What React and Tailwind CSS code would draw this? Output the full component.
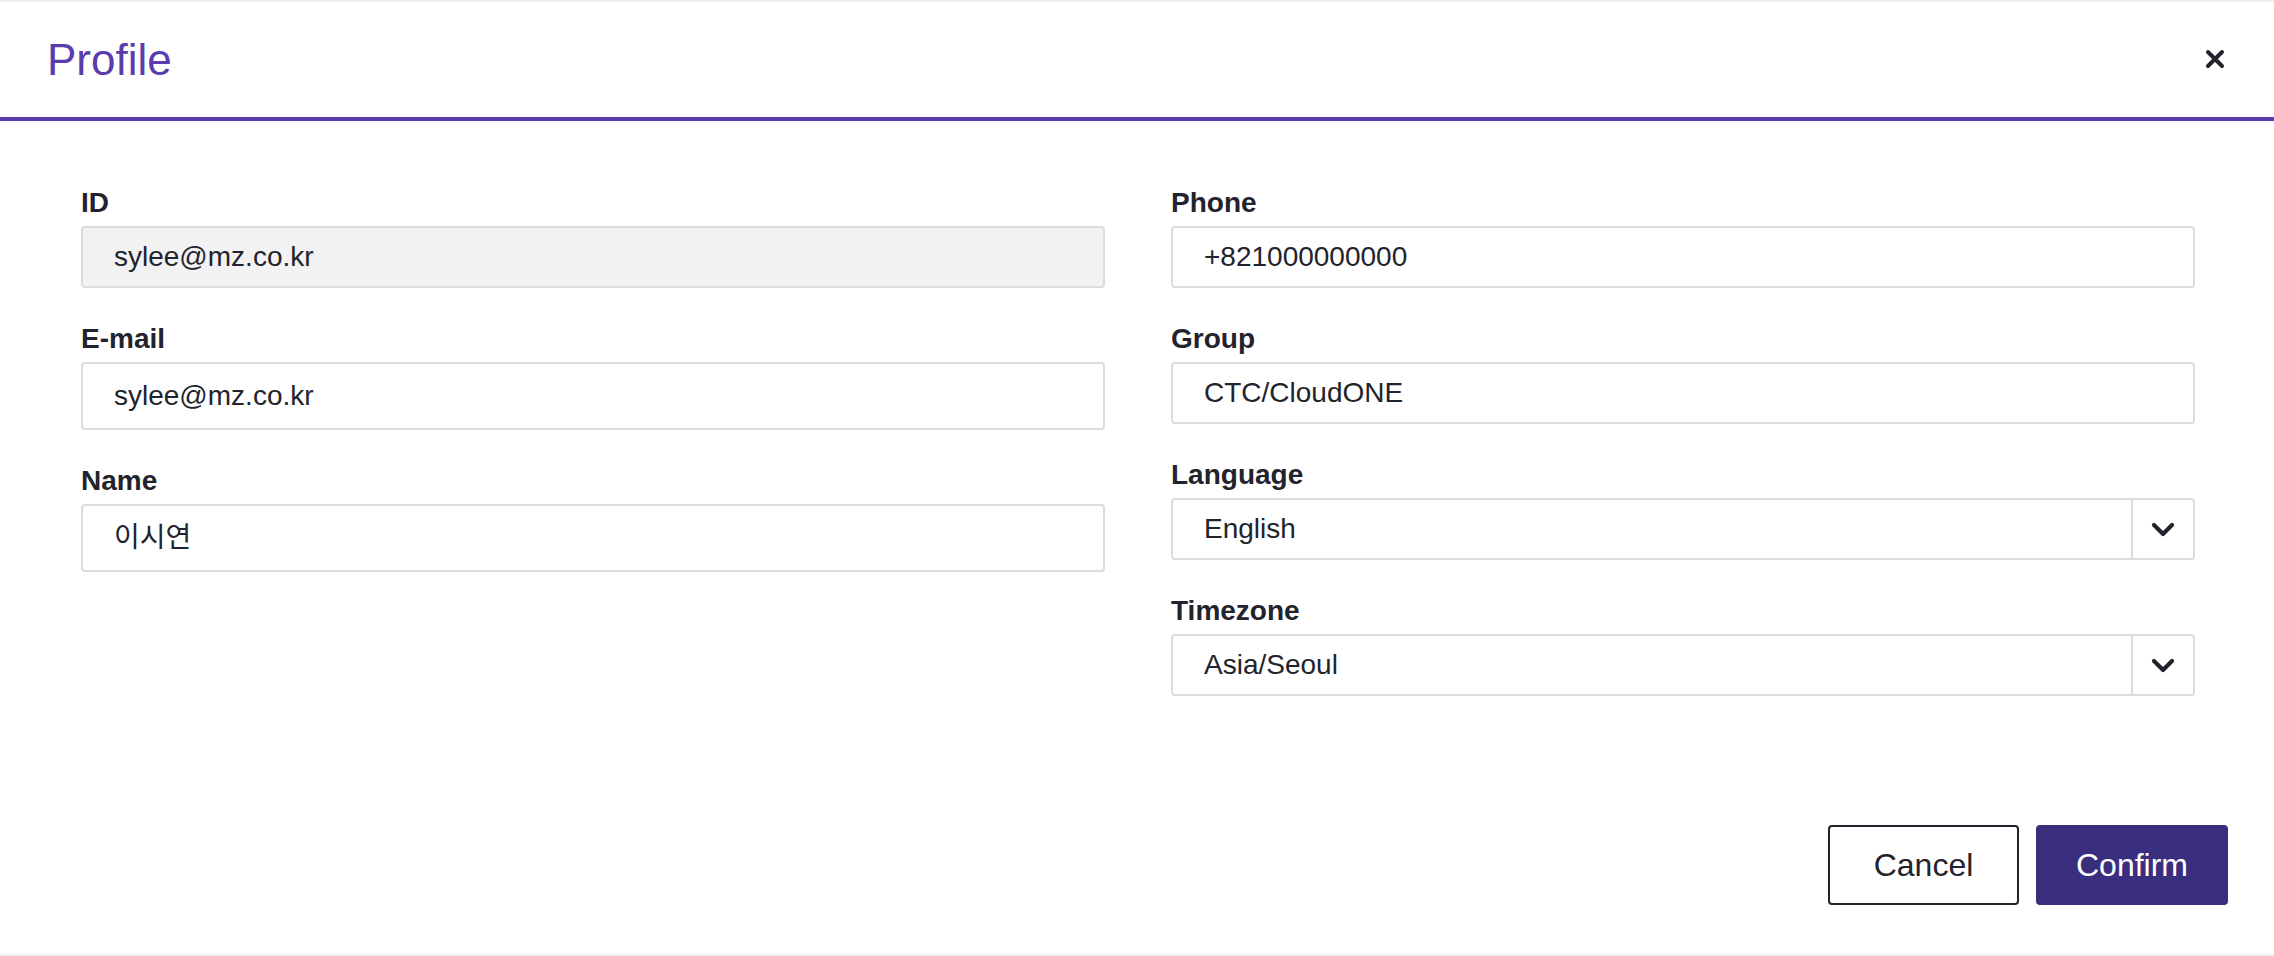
import React from "react";

const font = { fontFamily: '"Liberation Sans", Arial, "Noto Sans CJK KR", sans-serif' };

function Label({ children }) {
  return (
    <div className="text-[28px] leading-[34px] font-bold text-[#22232c] mb-[6px]">{children}</div>
  );
}

function TextInput({ value, disabled, tall }) {
  return (
    <div
      className={`${tall ? "h-[68px]" : "h-[62px]"} border-2 border-[#dcdce0] rounded-[4px] flex items-center pl-[31px] text-[28px] text-[#22232c] ${
        disabled ? "bg-[#f2f2f2]" : "bg-white"
      }`}
    >
      {value}
    </div>
  );
}

function Chevron() {
  return (
    <svg width="24" height="15" viewBox="0 0 24 15" fill="none">
      <path d="M3 3 L12 12 L21 3" stroke="#22232c" strokeWidth="4.2" strokeLinecap="round" strokeLinejoin="round" />
    </svg>
  );
}

function SelectInput({ value }) {
  return (
    <div className="h-[62px] border-2 border-[#dcdce0] rounded-[4px] flex items-stretch bg-white text-[28px] text-[#22232c]">
      <div className="flex-1 flex items-center pl-[31px]">{value}</div>
      <div className="w-[62px] border-l-2 border-[#dcdce0] flex items-center justify-center">
        <Chevron />
      </div>
    </div>
  );
}

function Field({ label, children }) {
  return (
    <div className="mb-[34px]">
      <Label>{label}</Label>
      {children}
    </div>
  );
}

export default function App() {
  return (
    <div className="w-[2274px] h-[956px] bg-[#f0f0f0] py-[2px]" style={font}>
      <div className="h-full bg-white flex flex-col">
        <div className="h-[115px] flex items-center justify-between pl-[47px] pr-[49px]">
          <div className="text-[44px] leading-[44px] text-[#5a3cad]">Profile</div>
          <button className="mb-[2px]">
            <svg width="20" height="20" viewBox="0 0 20 20" fill="none">
              <path d="M3 3 L17 17 M17 3 L3 17" stroke="#22232c" strokeWidth="4" strokeLinecap="round" />
            </svg>
          </button>
        </div>
        <div className="h-[4px] bg-[#5b3aaf]" />
        <div className="flex-1 pt-[65px] pl-[81px] pr-[79px]">
          <div className="grid grid-cols-2 gap-x-[66px]">
            <div>
              <Field label="ID">
                <TextInput value="sylee@mz.co.kr" disabled />
              </Field>
              <Field label="E-mail">
                <TextInput value="sylee@mz.co.kr" tall />
              </Field>
              <Field label="Name">
                <TextInput value="이시연" tall />
              </Field>
            </div>
            <div>
              <Field label="Phone">
                <TextInput value="+821000000000" />
              </Field>
              <Field label="Group">
                <TextInput value="CTC/CloudONE" />
              </Field>
              <Field label="Language">
                <SelectInput value="English" />
              </Field>
              <Field label="Timezone">
                <SelectInput value="Asia/Seoul" />
              </Field>
            </div>
          </div>
        </div>
        <div className="flex justify-end gap-[17px] pr-[46px] pb-[49px]">
          <button className="w-[191px] h-[80px] border-2 border-[#22232c] rounded-[4px] bg-white text-[32px] text-[#22232c]">
            Cancel
          </button>
          <button className="w-[192px] h-[80px] rounded-[4px] bg-[#3a2f7e] text-[32px] text-white">
            Confirm
          </button>
        </div>
      </div>
    </div>
  );
}
